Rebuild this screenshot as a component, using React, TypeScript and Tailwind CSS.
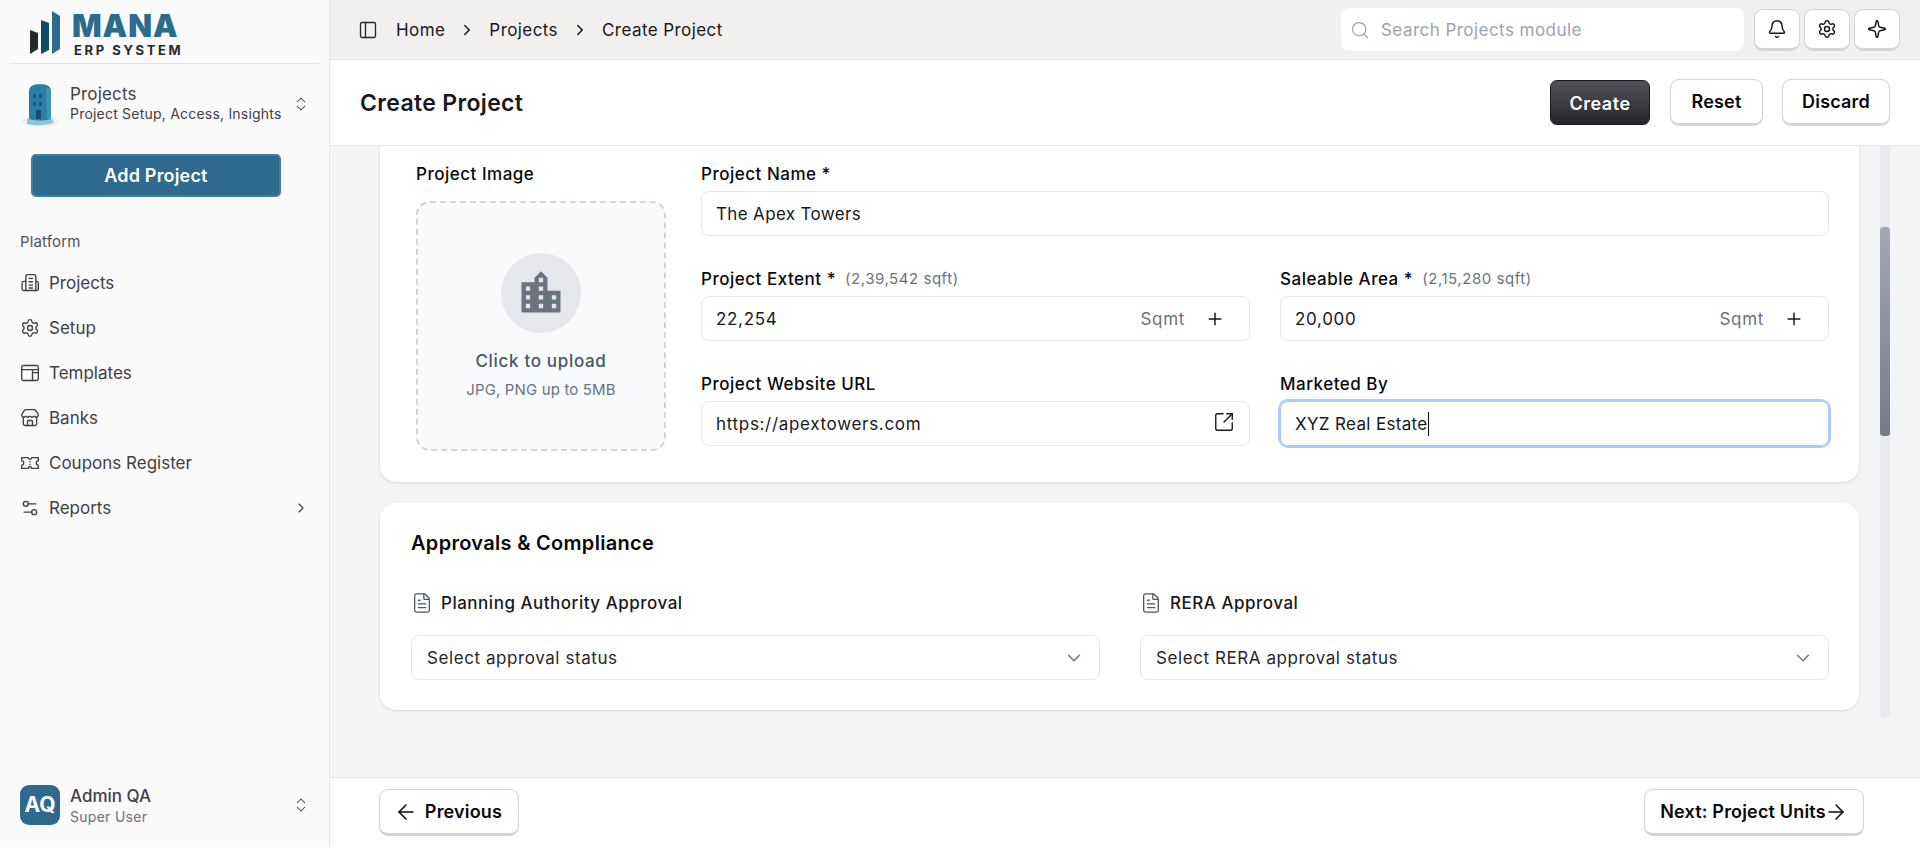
import { ReactNode } from 'react'
import {
  ArrowLeft,
  ArrowRight,
  Bell,
  ChevronDown,
  ChevronRight,
  ChevronsUpDown,
  FileText,
  PanelLeft,
  Plus,
  Search,
  Settings,
  Settings2,
  Sparkle,
  SquareArrowOutUpRight,
  Store,
} from 'lucide-react'
import { MdLocationCity } from 'react-icons/md'

const BuildingIcon = () => (
  <svg viewBox="0 0 24 24" className="h-5 w-5" fill="none" stroke="currentColor" strokeWidth="1.6" strokeLinecap="round" strokeLinejoin="round">
    <path d="M7 21V4a2 2 0 0 1 2-2h8a2 2 0 0 1 2 2v17" />
    <path d="M7 10H4.5a2 2 0 0 0-2 2v7a2 2 0 0 0 2 2h16a2 2 0 0 0 1.5-2v-7a2 2 0 0 0-2-2H19" />
    <path d="M11 6.5h4M11 10.5h4M11 14.5h4M11 18h4" />
  </svg>
)

const TemplateIcon = () => (
  <svg viewBox="0 0 24 24" className="h-5 w-5" fill="none" stroke="currentColor" strokeWidth="1.6" strokeLinecap="round" strokeLinejoin="round">
    <rect x="2" y="3" width="20" height="18" rx="2" />
    <path d="M2 8h20M15 8v13M15 11.5h7" />
  </svg>
)

const TicketIcon = () => (
  <svg viewBox="0 0 24 24" className="h-5 w-5" fill="none" stroke="currentColor" strokeWidth="1.6" strokeLinecap="round" strokeLinejoin="round">
    <path d="M2 5.5h8a2 2 0 0 0 4 0h8v4a2.5 2.5 0 0 0 0 5v4h-8a2 2 0 0 0-4 0H2v-4a2.5 2.5 0 0 0 0-5z" />
    <path d="M12 10v.5M12 13.5v.5" />
  </svg>
)

const ManaMark = () => (
  <svg viewBox="0 0 32 46" className="mt-[4px] h-[46px] w-[32px]">
    <polygon points="0,19 8,22 8,38 0,43" fill="#232b2d" />
    <polygon points="11,9 19,12 19,39 11,43" fill="#0f4a66" />
    <polygon points="22,0 30,5 30,38 22,43" fill="#2d6b8e" />
  </svg>
)

const ModuleArt = () => (
  <svg viewBox="0 0 40 44" className="h-[44px] w-[40px]">
    <ellipse cx="20" cy="38" rx="19" ry="6" fill="#f0f0f0" />
    <path d="M7 36 L32 36 L34 40 Q20 44 7 41 Z" fill="#8cc4dd" />
    <path d="M9 8 Q9 1 20 1 Q31 1 31 8 L31 36 Q20 39 9 36 Z" fill="#2b7ea6" />
    <path d="M26 4 Q31 5 31 8 L31 36 L27 37 Z" fill="#3f93b8" />
    <rect x="13" y="11" width="3" height="4" fill="#175a7c" />
    <rect x="19" y="11" width="3" height="4" fill="#175a7c" />
    <rect x="13" y="19" width="3" height="4" fill="#175a7c" />
    <rect x="19" y="19" width="3" height="4" fill="#175a7c" />
    <rect x="16" y="27" width="5" height="9" fill="#154f6d" />
  </svg>
)

const NavItem = ({ icon, label, chevron }: { icon: ReactNode; label: string; chevron?: boolean }) => (
  <div className="flex h-[45px] items-center gap-[9px] pl-[20px] pr-[20px] text-[#3f3f46]">
    {icon}
    <span className="flex-1 pt-[2px] text-[17px]">{label}</span>
    {chevron && <ChevronRight className="h-4 w-4" strokeWidth={1.75} />}
  </div>
)

const Sidebar = () => (
  <aside className="flex h-full w-[330px] shrink-0 flex-col border-r border-[#e9e9eb] bg-[#fafafa]">
    <div className="mx-[10px] flex h-[64px] items-center gap-[12px] border-b border-[#e5e5e5] pl-[20px] pt-[1px]">
      <ManaMark />
      <div className="mt-[11px] flex flex-col self-start">
        <span className="-ml-[2px] text-[31px] leading-[28px] font-black tracking-[0.03em] text-[#2d6b8e]">MANA</span>
        <span className="mt-[3px] text-[13px] leading-[15px] font-bold tracking-[0.2em] text-[#27272a]">ERP SYSTEM</span>
      </div>
    </div>
    <div className="mt-[19px] flex items-center pl-[20px] pr-[19px]">
      <ModuleArt />
      <div className="ml-[10px] flex-1 text-[#3f3f46]">
        <div className="-mt-[2px] text-[17px] leading-[20px] tracking-[0.01em]">Projects</div>
        <div className="text-[14px] leading-[20px] tracking-[0.015em]">Project Setup, Access, Insights</div>
      </div>
      <ChevronsUpDown className="-mt-[2px] h-[18px] w-[18px] text-[#3f3f46]" strokeWidth={1.4} />
    </div>
    <button className="mt-[27px] ml-[31px] flex h-[43px] w-[250px] items-center justify-center rounded-[5px] border-2 border-[#3f7ea3] bg-[#2d6a8e] text-[18px] font-semibold tracking-[0.01em] text-white">
      Add Project
    </button>
    <div className="mt-[35px] pl-[20px] text-[15px] leading-[20px] tracking-[0.01em] text-[#52525b]">Platform</div>
    <div className="mt-[8px] flex flex-col">
      <NavItem icon={<BuildingIcon />} label="Projects" />
      <NavItem icon={<Settings className="h-5 w-5" strokeWidth={1.6} />} label="Setup" />
      <NavItem icon={<TemplateIcon />} label="Templates" />
      <NavItem icon={<Store className="h-5 w-5" strokeWidth={1.6} />} label="Banks" />
      <NavItem icon={<TicketIcon />} label="Coupons Register" />
      <NavItem icon={<Settings2 className="h-5 w-5" strokeWidth={1.6} />} label="Reports" chevron />
    </div>
    <div className="mt-auto mb-[20px] flex items-center pl-[20px] pr-[19px]">
      <div className="flex h-[40px] w-[40px] items-center justify-center rounded-[9px] bg-[#2d6a8e] text-[21px] font-bold text-white">AQ</div>
      <div className="ml-[10px] flex-1 pt-[4px]">
        <div className="text-[17px] leading-[20px] font-medium text-[#3f3f46]">Admin QA</div>
        <div className="mt-[1px] text-[14px] leading-[20px] tracking-[0.02em] text-[#71717a]">Super User</div>
      </div>
      <ChevronsUpDown className="h-[18px] w-[18px] text-[#3f3f46]" strokeWidth={1.4} />
    </div>
  </aside>
)

const IconButton = ({ children }: { children: ReactNode }) => (
  <button className="flex h-[42px] w-[46px] items-center justify-center rounded-[9px] border border-b-[3px] border-[#d4d4d8] bg-white text-[#18181b]">
    {children}
  </button>
)

const TopBar = () => (
  <div className="flex h-[60px] shrink-0 items-center border-b border-[#e5e5e5] bg-[#f1f0ef] pl-[28px] pr-[20px]">
    <PanelLeft className="h-5 w-5 text-[#27272a]" strokeWidth={1.6} />
    <div className="ml-[18px] flex items-center gap-[13px] text-[17px] tracking-[0.025em] text-[#18181b]">
      <span className="pt-[2px]">Home</span>
      <ChevronRight className="h-[18px] w-[18px]" strokeWidth={2} />
      <span className="pt-[2px]">Projects</span>
      <ChevronRight className="h-[18px] w-[18px]" strokeWidth={2} />
      <span className="pt-[2px]">Create Project</span>
    </div>
    <div className="ml-auto flex h-[43px] w-[403px] items-center gap-[11px] rounded-[8px] bg-white pl-[9px]">
      <Search className="h-5 w-5 text-[#9ca3af]" strokeWidth={1.5} />
      <span className="pt-[2px] text-[17px] tracking-[0.027em] text-[#9ca3af]">Search Projects module</span>
    </div>
    <div className="ml-[10px] flex gap-[4px]">
      <IconButton><Bell className="h-5 w-5" strokeWidth={1.75} /></IconButton>
      <IconButton><Settings className="h-5 w-5" strokeWidth={1.75} /></IconButton>
      <IconButton><Sparkle className="h-5 w-5" strokeWidth={1.75} /></IconButton>
    </div>
  </div>
)

const OutlineButton = ({ children, className }: { children: ReactNode; className?: string }) => (
  <button className={`flex items-center justify-center rounded-[9px] border border-b-[3px] border-[#d4d4d8] bg-white text-[18px] font-semibold tracking-[0.01em] text-[#09090b] ${className ?? ''}`}>
    {children}
  </button>
)

const TitleBar = () => (
  <div className="flex h-[86px] shrink-0 items-center border-b border-[#e5e7eb] bg-white pl-[30px] pr-[30px]">
    <h1 className="pt-[2px] text-[23px] font-semibold tracking-[0.015em] text-[#18181b]">Create Project</h1>
    <div className="ml-auto flex items-center gap-[19px]">
      <button className="mr-[1px] flex h-[45px] w-[100px] items-center justify-center rounded-[7px] border border-[#18181b] bg-gradient-to-b from-[#52525b] to-[#27272a] pt-[2px] text-[18px] font-semibold tracking-[0.03em] text-white">
        Create
      </button>
      <OutlineButton className="h-[47px] w-[93px]">Reset</OutlineButton>
      <OutlineButton className="h-[47px] w-[108px]">Discard</OutlineButton>
    </div>
  </div>
)

const Label = ({ children, hint }: { children: ReactNode; hint?: string }) => (
  <div className="flex h-[20px] items-center gap-[9px]">
    <span className="pt-[2px] text-[17px] font-medium tracking-[0.03em] text-[#09090b]">{children}</span>
    {hint && <span className="pt-[1px] text-[15px] tracking-[0.036em] text-[#6b7280]">{hint}</span>}
  </div>
)

const Input = ({ value, children, tight }: { value: string; children?: ReactNode; tight?: boolean }) => (
  <div className="mt-[7px] flex h-[45px] items-center rounded-[8px] border border-[#e5e7eb] bg-white pl-[14px] pr-[14px] text-[17px] text-[#18181b]">
    <span className={`flex-1 pt-[2px] ${tight ? 'tracking-[0.02em]' : 'tracking-[0.04em]'}`}>{value}</span>
    {children}
  </div>
)

const SqmSuffix = () => (
  <>
    <span className="mr-[20px] pt-[2px] tracking-[0.04em] text-[#6b7280]">Sqmt</span>
    <Plus className="mr-[10px] h-5 w-5 text-[#18181b]" strokeWidth={1.75} />
  </>
)

const ProjectCard = () => (
  <div className="-mt-[100px] flex gap-[35px] rounded-[16px] bg-white pt-[118px] pr-[30px] pb-[31px] pl-[36px] shadow-sm">
    <div className="w-[250px] shrink-0">
      <Label>Project Image</Label>
      <div className="mt-[17px] flex h-[250px] flex-col items-center justify-center rounded-[14px] border-2 border-dashed border-[#d1d5db] bg-[#f9fafb] pt-[2px]">
        <div className="flex h-[80px] w-[80px] items-center justify-center rounded-full bg-[#e5e7eb]">
          <MdLocationCity className="h-[52px] w-[52px] text-[#6b7280]" />
        </div>
        <div className="mt-[16px] text-[17px] font-medium tracking-[0.04em] text-[#4b5563]">Click to upload</div>
        <div className="mt-[4px] text-[15px] tracking-[0.01em] text-[#6b7280]">JPG, PNG up to 5MB</div>
      </div>
    </div>
    <div className="min-w-0 flex-1">
      <Label>Project Name *</Label>
      <Input value="The Apex Towers" tight />
      <div className="mt-[33px] grid grid-cols-2 gap-x-[30px] gap-y-[33px]">
        <div>
          <Label hint="(2,39,542 sqft)">Project Extent *</Label>
          <Input value="22,254"><SqmSuffix /></Input>
        </div>
        <div>
          <Label hint="(2,15,280 sqft)">Saleable Area *</Label>
          <Input value="20,000"><SqmSuffix /></Input>
        </div>
        <div>
          <Label>Project Website URL</Label>
          <Input value="https://apextowers.com">
            <SquareArrowOutUpRight className="-mt-[3px] h-[22px] w-[22px] text-[#18181b]" strokeWidth={1.5} />
          </Input>
        </div>
        <div>
          <Label>Marketed By</Label>
          <div className="mt-[7px] flex h-[45px] items-center rounded-[8px] border border-[#a8c7fa] pl-[14px] text-[17px] tracking-[0.02em] text-[#18181b] ring-[2px] ring-[#aecbfa]">
            <span className="border-r border-[#09090b] leading-[24px]">XYZ Real Estate</span>
          </div>
        </div>
      </div>
    </div>
  </div>
)

const SelectField = ({ label, placeholder }: { label: string; placeholder: string }) => (
  <div>
    <div className="flex h-[20px] items-center gap-[8px]">
      <FileText className="h-[22px] w-[22px] text-[#4b5563]" strokeWidth={1.4} />
      <span className="pt-[2px] text-[17px] font-medium tracking-[0.03em] text-[#18181b]">{label}</span>
    </div>
    <div className="mt-[22px] flex h-[45px] items-center justify-between rounded-[8px] border border-[#e5e7eb] pl-[15px] pr-[14px] text-[17px] tracking-[0.034em] text-[#27272a]">
      <span className="pt-[2px]">{placeholder}</span>
      <ChevronDown className="h-[22px] w-[22px] text-[#6b7280]" strokeWidth={1.5} />
    </div>
  </div>
)

const ApprovalsCard = () => (
  <div className="mt-[21px] rounded-[16px] bg-white pt-[28px] pr-[30px] pb-[30px] pl-[31px] shadow-sm">
    <h2 className="text-[20px] leading-[24px] font-semibold tracking-[0.015em] text-[#09090b]">Approvals &amp; Compliance</h2>
    <div className="mt-[38px] grid grid-cols-2 gap-[40px]">
      <SelectField label="Planning Authority Approval" placeholder="Select approval status" />
      <SelectField label="RERA Approval" placeholder="Select RERA approval status" />
    </div>
  </div>
)

const Footer = () => (
  <div className="flex h-[70px] shrink-0 items-center justify-between border-t border-[#e5e7eb] bg-white pr-[56px] pl-[49px]">
    <OutlineButton className="h-[47px] w-[140px] gap-[7px] pr-[2px]">
      <ArrowLeft className="h-6 w-6" strokeWidth={1.5} />
      Previous
    </OutlineButton>
    <OutlineButton className="h-[47px] w-[220px]">
      Next: Project Units
      <ArrowRight className="-ml-[2px] h-6 w-6" strokeWidth={1.5} />
    </OutlineButton>
  </div>
)

export default function App() {
  return (
    <div className="flex h-[847px] w-[1920px] overflow-hidden font-['Inter',sans-serif]">
      <Sidebar />
      <main className="flex min-w-0 flex-1 flex-col">
        <TopBar />
        <TitleBar />
        <div className="relative flex-1 overflow-hidden bg-[#f3f4f6] pr-[61px] pl-[50px]">
          <ProjectCard />
          <ApprovalsCard />
          {/* scrollbar, sits over the scroll area */}
          <div className="absolute top-0 right-[30px] h-[573px] w-[10px] rounded-b-[5px] bg-[#e9eaed]">
            <div className="absolute top-[81px] h-[209px] w-full rounded-[3px] bg-gradient-to-b from-[#a3a8b3] to-[#757b88]" />
          </div>
        </div>
        <Footer />
      </main>
    </div>
  )
}
